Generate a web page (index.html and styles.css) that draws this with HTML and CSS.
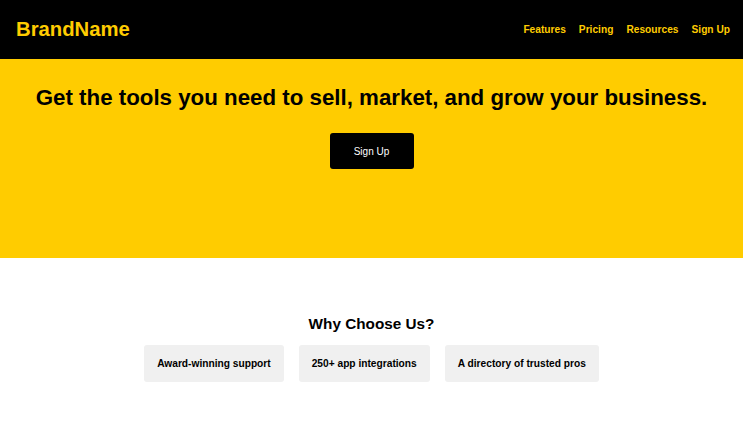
FILE: index.html
```html
<!DOCTYPE html>
<html lang="en">
<head>
<meta charset="utf-8">
<title>BrandName</title>
<link rel="stylesheet" href="styles.css">
</head>
<body>
<header class="topbar">
  <div class="brand">BrandName</div>
  <nav class="nav">
    <a href="#">Features</a>
    <a href="#">Pricing</a>
    <a href="#">Resources</a>
    <a href="#">Sign Up</a>
  </nav>
</header>
<section class="hero">
  <h1>Get the tools you need to sell, market, and grow your business.</h1>
  <a class="cta" href="#">Sign Up</a>
</section>
<section class="why">
  <h2>Why Choose Us?</h2>
  <div class="cards">
    <div class="card">Award-winning support</div>
    <div class="card">250+ app integrations</div>
    <div class="card">A directory of trusted pros</div>
  </div>
</section>
</body>
</html>
```
FILE: styles.css
```css
* { box-sizing: border-box; }
body {
  margin: 0;
  font-family: "Liberation Sans", Arial, sans-serif;
  background: #fff;
}
.topbar {
  height: 59px;
  background: #000;
  display: flex;
  align-items: center;
  justify-content: space-between;
  padding: 0 13px 0 16px;
}
.brand {
  color: #ffcc00;
  font-size: 20.3px;
  font-weight: bold;
}
.nav {
  display: flex;
  gap: 13px;
}
.nav a {
  color: #ffcc00;
  font-size: 10.2px;
  font-weight: bold;
  text-decoration: none;
}
.hero {
  height: 199px;
  background: #ffcc00;
  display: flex;
  flex-direction: column;
  align-items: center;
  padding-top: 27px;
}
.hero h1 {
  margin: 0;
  font-size: 22.3px;
  font-weight: bold;
  color: #000;
  line-height: 24px;
}
.cta {
  margin-top: 23px;
  width: 84px;
  height: 36px;
  background: #000;
  color: #fff;
  border-radius: 3px;
  font-size: 10px;
  display: flex;
  align-items: center;
  justify-content: center;
  text-decoration: none;
}
.why {
  display: flex;
  flex-direction: column;
  align-items: center;
  padding-top: 57px;
}
.why h2 {
  margin: 0;
  font-size: 15.3px;
  font-weight: bold;
  line-height: 18px;
}
.cards {
  margin-top: 12px;
  display: flex;
  gap: 15px;
}
.card {
  background: #f0f0f0;
  border-radius: 3px;
  height: 37px;
  padding: 0 13px;
  display: flex;
  align-items: center;
  font-size: 10.2px;
  font-weight: bold;
}
```
